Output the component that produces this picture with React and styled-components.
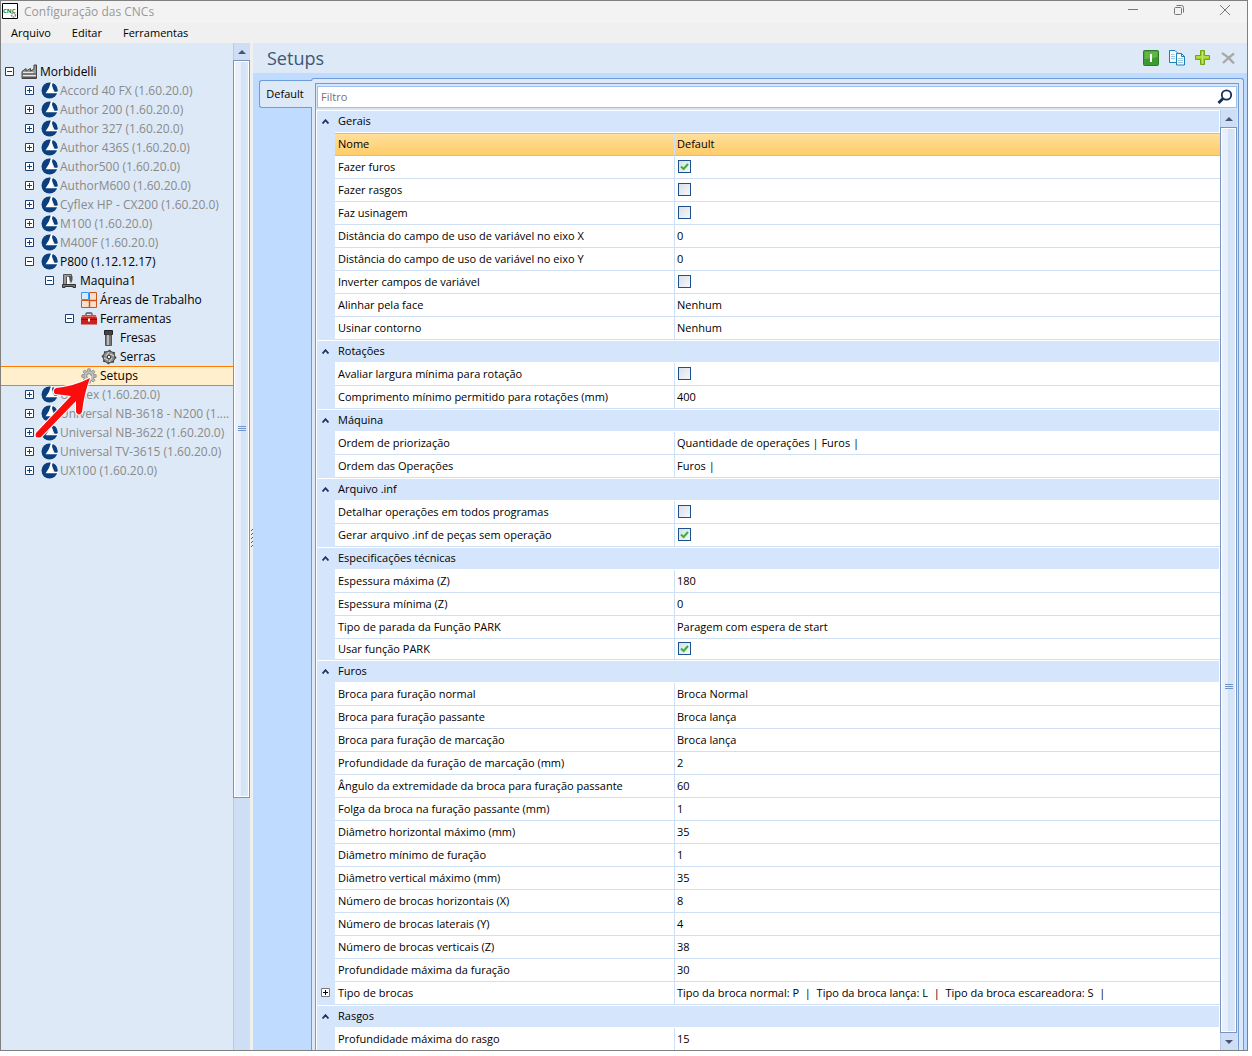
import React, { Component } from 'react'
import styled, { createGlobalStyle, css } from 'styled-components'

const tree = [
    {level:0, icon:'factory', label:'Morbidelli', open:true, dark:true},
    {level:1, icon:'brand', label:'Accord 40 FX (1.60.20.0)', open:false},
    {level:1, icon:'brand', label:'Author 200 (1.60.20.0)', open:false},
    {level:1, icon:'brand', label:'Author 327 (1.60.20.0)', open:false},
    {level:1, icon:'brand', label:'Author 436S (1.60.20.0)', open:false},
    {level:1, icon:'brand', label:'Author500 (1.60.20.0)', open:false},
    {level:1, icon:'brand', label:'AuthorM600 (1.60.20.0)', open:false},
    {level:1, icon:'brand', label:'Cyflex HP - CX200 (1.60.20.0)', open:false},
    {level:1, icon:'brand', label:'M100 (1.60.20.0)', open:false},
    {level:1, icon:'brand', label:'M400F (1.60.20.0)', open:false},
    {level:1, icon:'brand', label:'P800 (1.12.12.17)', open:true, dark:true},
    {level:2, icon:'machine', label:'Maquina1', open:true, dark:true},
    {level:3, icon:'areas', label:'Áreas de Trabalho', dark:true},
    {level:3, icon:'toolbox', label:'Ferramentas', open:true, dark:true},
    {level:4, icon:'mill', label:'Fresas', dark:true},
    {level:4, icon:'saw', label:'Serras', dark:true},
    {level:3, icon:'gear', label:'Setups', dark:true, selected:true},
    {level:1, icon:'brand', label:'Uniflex (1.60.20.0)', open:false},
    {level:1, icon:'brand', label:'Universal NB-3618 - N200 (1....', open:false},
    {level:1, icon:'brand', label:'Universal NB-3622 (1.60.20.0)', open:false},
    {level:1, icon:'brand', label:'Universal TV-3615 (1.60.20.0)', open:false},
    {level:1, icon:'brand', label:'UX100 (1.60.20.0)', open:false},
]

const groups = [
    {title:'Gerais', rows:[
        ['Nome','Default'],
        ['Fazer furos',true],
        ['Fazer rasgos',false],
        ['Faz usinagem',false],
        ['Distância do campo de uso de variável no eixo X','0'],
        ['Distância do campo de uso de variável no eixo Y','0'],
        ['Inverter campos de variável',false],
        ['Alinhar pela face','Nenhum'],
        ['Usinar contorno','Nenhum'],
    ]},
    {title:'Rotações', rows:[
        ['Avaliar largura mínima para rotação',false],
        ['Comprimento mínimo permitido para rotações (mm)','400'],
    ]},
    {title:'Máquina', rows:[
        ['Ordem de priorização','Quantidade de operações | Furos |'],
        ['Ordem das Operações','Furos |'],
    ]},
    {title:'Arquivo .inf', rows:[
        ['Detalhar operações em todos programas',false],
        ['Gerar arquivo .inf de peças sem operação',true],
    ]},
    {title:'Especificações técnicas', short:true, rows:[
        ['Espessura máxima (Z)','180'],
        ['Espessura mínima (Z)','0'],
        ['Tipo de parada da Função PARK','Paragem com espera de start'],
        ['Usar função PARK',true],
    ]},
    {title:'Furos', rows:[
        ['Broca para furação normal','Broca Normal'],
        ['Broca para furação passante','Broca lança'],
        ['Broca para furação de marcação','Broca lança'],
        ['Profundidade da furação de marcação (mm)','2'],
        ['Ângulo da extremidade da broca para furação passante','60'],
        ['Folga da broca na furação passante (mm)','1'],
        ['Diâmetro horizontal máximo (mm)','35'],
        ['Diâmetro mínimo de furação','1'],
        ['Diâmetro vertical máximo (mm)','35'],
        ['Número de brocas horizontais (X)','8'],
        ['Número de brocas laterais (Y)','4'],
        ['Número de brocas verticais (Z)','38'],
        ['Profundidade máxima da furação','30'],
        ['Tipo de brocas','Tipo da broca normal: P  |  Tipo da broca lança: L  |  Tipo da broca escareadora: S  |'],
    ]},
    {title:'Rasgos', rows:[
        ['Profundidade máxima do rasgo','15'],
    ]},
]

const teeth = [0,45,90,135,180,225,270,315]

function TreeIcon({name}) {
    if (name==='brand') return (
        <svg width="17" height="17" viewBox="0 0 17 17">
            <circle cx="8.5" cy="8.5" r="8" fill="#0b3f7d"/>
            <path d="M10 0 H12 L11.6 2.6 L11.4 9.6 H17 V11.2 H4.6 Q8.6 6.5 10 0 Z" fill="#fff"/>
            <path d="M11.8 1.2 A8 8 0 0 1 16.4 9.4 H13.8 L11 3.6 Z" fill="#0b3f7d"/>
            <path d="M11.2 4.6 L13.4 9.8 H11 Z" fill="#fff"/>
        </svg>
    )
    if (name==='factory') return (
        <svg width="17" height="17" viewBox="0 0 17 17">
            <path d="M1 15.5 V8.5 L5 5.5 V8 L9.5 5.5 V8 L13 6 V2 H15.5 V15.5 Z" fill="#999" stroke="#444"/>
            <path d="M2 9.5 H12.5 M2 12.5 H15" stroke="#e8e8e8"/>
            <path d="M1.5 11 H15 M1.5 14.5 H15" stroke="#555"/>
        </svg>
    )
    if (name==='machine') return (
        <svg width="16" height="16" viewBox="0 0 16 16">
            <path d="M2.5 12 V1.5 H10.5 V4 H5.5 V12 Z" fill="#999" stroke="#555"/>
            <path d="M6 4 H8 V11 H6 Z" fill="#fff"/>
            <path d="M8 3 H11.5 V7 L10 10.5 L8.5 7 Z" fill="#555"/>
            <path d="M1.5 11.5 H14.5 V14.5 H12 V13.5 H4 V14.5 H1.5 Z" fill="#777" stroke="#333"/>
        </svg>
    )
    if (name==='areas') return (
        <svg width="16" height="16" viewBox="0 0 16 16">
            <path d="M8.5 .5 H15.5 V15.5 H.5 V8.5 H8.5 Z" fill="#f9dfcb" stroke="#c8581c"/>
            <path d="M8.5 8 V15.5 M8 8.5 H15.5" stroke="#c8581c" strokeWidth="1.5"/>
            <path d="M.5 .5 H7.5 V7.5 H.5 Z" fill="#d8ecff" stroke="#3399ff"/>
        </svg>
    )
    if (name==='toolbox') return (
        <svg width="16" height="16" viewBox="0 0 16 16">
            <path d="M5 5 V3 Q5 2 6 2 H10 Q11 2 11 3 V5" fill="none" stroke="#555" strokeWidth="1.3"/>
            <path d="M1.5 4 H14.5 L16 7 V13.5 H0 V7 Z" fill="#c9211e"/>
            <path d="M1.5 4.5 H14.5 L15 6 H1 Z" fill="#ea6a62"/>
            <path d="M0 8.5 H16" stroke="#8f1010"/>
            <path d="M7 7.5 H9 V10.5 H7 Z" fill="#fff"/>
        </svg>
    )
    if (name==='mill') return (
        <svg width="16" height="16" viewBox="0 0 16 16">
            <path d="M3.5 .5 H11.5 V4.5 H3.5 Z" fill="#444" stroke="#222"/>
            <path d="M4.5 5 H10.5 V15.5 H4.5 Z" fill="#777" stroke="#555"/>
            <path d="M7 5 V15" stroke="#bbb" strokeWidth="2"/>
        </svg>
    )
    if (name==='saw') return (
        <svg width="16" height="16" viewBox="0 0 16 16">
            {teeth.map(a=><path key={a} transform={`rotate(${a} 8 8)`} d="M5 3 L9 .4 L11 3.5 Z" fill="#444"/>)}
            <circle cx="8" cy="8" r="5.8" fill="#8c8c8c" stroke="#555"/>
            <path d="M8 3 L5 7 M13 7 L9 5 M8 13 L11 9 M3 9 L7 11" stroke="#ddd"/>
            <circle cx="8" cy="8" r="1.8" fill="#eee" stroke="#333"/>
        </svg>
    )
    return (
        <svg width="16" height="16" viewBox="0 0 16 16">
            {teeth.map(a=><path key={a} transform={`rotate(${a} 8 8)`} d="M6.8 .8 H9.2 L9.7 4 H6.3 Z" fill="#c4c4c4" stroke="#777" strokeWidth=".7"/>)}
            <circle cx="8" cy="8" r="5" fill="#c4c4c4" stroke="#8d8d8d" strokeWidth=".6"/>
            <circle cx="8" cy="8" r="2.4" fill="#ffefcd" stroke="#777" strokeWidth=".9"/>
        </svg>
    )
}

function Expander({open,label,gray}) {
    return (
        <ExpandButton aria-label={(open?'Recolher ':'Expandir ')+label}>
            <svg width="9" height="9" viewBox="0 0 9 9">
                <path d="M.5 .5 H8.5 V8.5 H.5 Z" fill="#fff" stroke={gray?'#777':'#1c3f75'}/>
                <path d={open?'M2 4.5 H7':'M2 4.5 H7 M4.5 2 V7'} stroke={gray?'#000':'#1c3f75'}/>
            </svg>
        </ExpandButton>
    )
}

function ScrollBar({size,rest,grip,down}) {
    return (
        <ScrollTrack>
            <ScrollButton aria-label="Rolar para cima">
                <svg width="8" height="4" viewBox="0 0 8 4"><path d="M0 4 L4 0 L8 4 Z" fill="#4a5377"/></svg>
            </ScrollButton>
            <ScrollThumb $size={size} $grip={grip}>
                <svg width="8" height="6" viewBox="0 0 8 6"><path d="M0 .5 H8 M0 2.5 H8 M0 4.5 H8" stroke="#6f95cc"/></svg>
            </ScrollThumb>
            {rest?<ScrollRest $size={rest}/>:null}
            {down?(
                <ScrollButton aria-label="Rolar para baixo">
                    <svg width="8" height="4" viewBox="0 0 8 4"><path d="M0 0 L4 4 L8 0 Z" fill="#4a5377"/></svg>
                </ScrollButton>
            ):null}
        </ScrollTrack>
    )
}

class Sidebar extends Component {
    render() {
        return (
            <SideWrap>
                <Tree>
                    {tree.map((item)=>(
                        <TreeRow key={item.label+item.level} $level={item.level} $dark={item.dark} $selected={item.selected}>
                            <Slot>
                                {item.open===undefined?null:<Expander open={item.open} label={item.label}/>}
                            </Slot>
                            <IconBox><TreeIcon name={item.icon}/></IconBox>
                            <TreeLabel>{item.label}</TreeLabel>
                        </TreeRow>
                    ))}
                    <Arrow viewBox="0 0 66 66">
                        <path d="M3 57 L38 20 L22 18 Q19 14 23 12 Q42 10 57 2 Q51 18 49 36 Q46 41 43 36 L43 25 L8 61 Q1 63 3 57 Z" fill="#f90d0d" stroke="#fff" strokeWidth="2" paintOrder="stroke"/>
                    </Arrow>
                </Tree>
                <ScrollBar size={738} rest={253}/>
            </SideWrap>
        )
    }
}

class PropertyGrid extends Component {
    render() {
        return (
            <Grid>
                <colgroup>
                    <GutterCol/>
                    <NameCol/>
                    <col/>
                </colgroup>
                {groups.map((group)=>(
                    <tbody key={group.title}>
                        <tr>
                            <GroupMark>
                                <GroupButton aria-label={'Recolher '+group.title}>
                                    <svg width="7" height="5" viewBox="0 0 7 5"><path d="M.5 4.5 L3.5 1.2 L6.5 4.5" fill="none" stroke="#17356b" strokeWidth="1.8"/></svg>
                                </GroupButton>
                            </GroupMark>
                            <GroupTitle colSpan="2" scope="colgroup">{group.title}</GroupTitle>
                        </tr>
                        {group.rows.map(([name,value],i)=>{
                            const selected=name==='Nome'
                            const short=group.short && i===group.rows.length-1
                            const id='campo-'+name.replace(/\W+/g,'-')
                            return (
                                <tr key={name}>
                                    <Gutter>{name==='Tipo de brocas'?<Expander label={name} gray/>:null}</Gutter>
                                    <NameCell scope="row" $selected={selected} $short={short}>
                                        {typeof value==='boolean'?<label htmlFor={id}>{name}</label>:name}
                                    </NameCell>
                                    <ValueCell $selected={selected} $short={short}>
                                        {typeof value==='boolean'?<Check id={id} defaultChecked={value}/>:value}
                                    </ValueCell>
                                </tr>
                            )
                        })}
                    </tbody>
                ))}
            </Grid>
        )
    }
}

function Check({id,defaultChecked}) {
    return (
        <CheckWrap>
            <CheckInput type="checkbox" id={id} defaultChecked={defaultChecked}/>
            <svg width="9" height="9" viewBox="0 0 9 9"><path d="M1 4.5 L3.6 7 L8 2" fill="none" stroke="#3fae3a" strokeWidth="2"/></svg>
        </CheckWrap>
    )
}

export default class App extends Component {
    render() {
        return (
            <Window>
                <GlobalStyle/>
                <TitleBar>
                    <svg width="16" height="16" viewBox="0 0 16 16">
                        <path d="M.5 .5 H15.5 V15.5 H.5 Z" fill="#fff" stroke="#000"/>
                        <AppMark x="1" y="10">CNC</AppMark>
                        <circle cx="11.5" cy="12" r="2" fill="none" stroke="#888" strokeWidth="1.5" strokeDasharray="1.5 .6"/>
                    </svg>
                    <WindowTitle>Configuração das CNCs</WindowTitle>
                    <WindowButton aria-label="Minimizar">
                        <svg width="10" height="10" viewBox="0 0 10 10"><path d="M0 4.5 H10" stroke="#777"/></svg>
                    </WindowButton>
                    <WindowButton aria-label="Restaurar">
                        <svg width="10" height="10" viewBox="0 0 10 10" fill="none" stroke="#777"><rect x=".5" y="2.5" width="7" height="7" rx="1"/><path d="M2.5 .5 H7.5 Q9.5 .5 9.5 2.5 V7.5"/></svg>
                    </WindowButton>
                    <WindowButton aria-label="Fechar">
                        <svg width="10" height="10" viewBox="0 0 10 10"><path d="M0 0 L10 10 M10 0 L0 10" stroke="#777"/></svg>
                    </WindowButton>
                </TitleBar>
                <MenuBar>
                    <MenuButton>Arquivo</MenuButton>
                    <MenuButton>Editar</MenuButton>
                    <MenuButton>Ferramentas</MenuButton>
                </MenuBar>
                <Body>
                    <Sidebar/>
                    <Splitter>
                        <svg width="2" height="18" viewBox="0 0 2 18">
                            {[0,4,8,12,16].map(y=><path key={y} d={`M0 ${y+1.5} H1 M1 ${y+.5} H2`} stroke="#1f66c8"/>)}
                        </svg>
                    </Splitter>
                    <Main>
                        <Header>
                            <Heading>Setups</Heading>
                            <ToolButton aria-label="Ativar">
                                <svg width="16" height="16" viewBox="0 0 16 16">
                                    <rect x=".5" y=".5" width="15" height="15" rx="1" fill="#3c9a30" stroke="#2a7d27"/>
                                    <path d="M1.5 1.5 H14.5 V7 Q8 9 1.5 9 Z" fill="#63b548"/>
                                    <path d="M7 4 H9 V12 H7 Z" fill="#fff"/>
                                </svg>
                            </ToolButton>
                            <ToolButton aria-label="Copiar">
                                <svg width="16" height="16" viewBox="0 0 16 16">
                                    <path d="M.5 .5 H6 L8.5 3 V12.5 H.5 Z" fill="#f4fbff" stroke="#1d7fb8"/>
                                    <path d="M2 4.5 H5 M2 6.5 H6 M2 8.5 H6" stroke="#9cc9e4"/>
                                    <path d="M7.5 3.5 H12.5 L15.5 6.5 V15 H7.5 Z" fill="#f4fbff" stroke="#1d7fb8"/>
                                    <path d="M12.5 3.5 V6.5 H15.5" fill="none" stroke="#1d7fb8"/>
                                    <path d="M9 8.5 H14 M9 10.5 H14 M9 12.5 H14" stroke="#9cc9e4"/>
                                </svg>
                            </ToolButton>
                            <ToolButton aria-label="Adicionar">
                                <svg width="16" height="16" viewBox="0 0 16 16">
                                    <path d="M5.5 .5 H9.5 V5.5 H14.5 V9.5 H9.5 V14.5 H5.5 V9.5 H.5 V5.5 H5.5 Z" fill="#9ed02a" stroke="#6fa514"/>
                                    <path d="M7.5 1.5 V13.5 M1.5 7 H13.5" stroke="#c3e86a"/>
                                </svg>
                            </ToolButton>
                            <ToolButton aria-label="Excluir">
                                <svg width="16" height="16" viewBox="0 0 16 16"><path d="M1 3 Q8 7 13 13.5 M13 3.5 Q7 8 2 13" fill="none" stroke="#a8a8a8" strokeWidth="2.2"/></svg>
                            </ToolButton>
                        </Header>
                        <Workspace>
                            <TabButton>Default</TabButton>
                            <Page>
                                <Inner>
                                    <FilterBox>
                                        <FilterInput type="text" placeholder="Filtro" aria-label="Filtro"/>
                                        <SearchButton aria-label="Pesquisar">
                                            <svg width="16" height="16" viewBox="0 0 16 16"><circle cx="9.5" cy="6" r="4.7" fill="none" stroke="#16305c" strokeWidth="1.8"/><path d="M6 9.5 L1.5 14" stroke="#16305c" strokeWidth="3"/></svg>
                                        </SearchButton>
                                    </FilterBox>
                                    <GridArea>
                                        <GridScroll><PropertyGrid/></GridScroll>
                                        <ScrollBar size={1} grip={214} down/>
                                    </GridArea>
                                </Inner>
                            </Page>
                        </Workspace>
                    </Main>
                </Body>
            </Window>
        )
    }
}

const GlobalStyle=createGlobalStyle
`
*{
    box-sizing:border-box;
}
body{
    margin:0;
    background:#fff;
}
button,input{
    font:inherit;
    color:inherit;
    margin:0;
    padding:0;
}
button{
    display:flex;
    align-items:center;
    justify-content:center;
    border:0;
    background:transparent;
}
svg{
    display:block;
}
`

const Window=styled.div
`
display:flex;
flex-direction:column;
height:calc(100vh - 5px);
margin-right:4px;
overflow:hidden;
border:1px solid #808080;
background:#f0f0f0;
color:#000;
font-family:"Open Sans","Noto Sans",sans-serif;
font-size:11px;
`

const TitleBar=styled.header
`
display:flex;
align-items:center;
height:22px;
padding:0 0 2px 1px;
background:#f3f3f3;
`

const AppMark=styled.text
`
fill:#0a7a1c;
font-size:6px;
font-weight:bold;
`

const WindowTitle=styled.div
`
flex:1;
padding-left:6px;
font-size:12px;
color:#999;
`

const WindowButton=styled.button
`
width:46px;
height:20px;
padding:0 0 2px 2px;
`

const MenuBar=styled.nav
`
display:flex;
gap:21px;
height:20px;
padding:0 10px;
`

const MenuButton=styled.button
`
height:18px;
`

const Body=styled.div
`
display:flex;
flex:1;
min-height:0;
`

const SideWrap=styled.aside
`
display:flex;
flex:0 0 249px;
min-width:0;
background:#dde9f7;
`

const Tree=styled.div
`
position:relative;
flex:1;
min-width:0;
padding-top:19px;
`

const TreeRow=styled.div
`
display:flex;
align-items:center;
height:19px;
padding-left:${p=>p.$level*20+4}px;
font-size:12px;
color:${p=>p.$dark?'#000':'#8a8a8a'};
${p=>p.$selected && css`
    height:20px;
    margin-bottom:-1px;
    padding-bottom:1px;
    border:solid #ff7800;
    border-width:1px 0;
    background:#ffefcd;
`}
`

const Slot=styled.span
`
flex:0 0 16px;
`

const IconBox=styled.span
`
flex:0 0 17px;
`

const TreeLabel=styled.span
`
padding-left:2px;
white-space:nowrap;
`

const ExpandButton=styled.button
`
width:9px;
height:9px;
`

const Arrow=styled.svg
`
position:absolute;
left:32px;
top:333px;
width:66px;
height:66px;
`

const ScrollTrack=styled.div
`
display:flex;
flex-direction:column;
flex:0 0 17px;
border-left:1px solid #b6cbe8;
background:#cddef5;
`

const ScrollButton=styled.button
`
flex:0 0 17px;
`

const ScrollThumb=styled.div
`
display:flex;
align-items:center;
justify-content:center;
flex:${p=>p.$size} 1 0;
margin-left:-1px;
padding-top:${p=>p.$grip||0}px;
border:1px solid #7a93bf;
box-shadow:inset 0 0 0 1px #fff;
background:linear-gradient(90deg,#ecf2fc 0,#e6eefb 50%,#d3e2f6 50%,#dde9f8 100%);
`

const ScrollRest=styled.div
`
flex:${p=>p.$size} 1 0;
`

const Splitter=styled.div
`
display:flex;
align-items:center;
justify-content:flex-end;
flex:0 0 3px;
background:#f0f0f0;
padding-bottom:18px;
`

const Main=styled.main
`
display:flex;
flex-direction:column;
flex:1;
min-width:0;
background:#bfdbff;
`

const Header=styled.div
`
display:flex;
align-items:center;
gap:10px;
height:30px;
padding:0 10px 0 14px;
background:#dde9f7;
`

const Heading=styled.h1
`
flex:1;
margin:0;
font-size:18px;
font-weight:400;
color:#3d5674;
`

const ToolButton=styled.button
`
width:16px;
height:16px;
`

const Workspace=styled.div
`
display:flex;
align-items:flex-start;
flex:1;
min-height:0;
padding:5px 3px 0 6px;
`

const TabButton=styled.button
`
position:relative;
z-index:1;
width:53px;
height:28px;
margin:2px -1px 0 0;
padding:0 2px 2px 0;
border:1px solid #6f9bd8;
border-right:0;
border-radius:3px 0 0 3px;
background:#dde9f7;
`

const Page=styled.section
`
align-self:stretch;
display:flex;
flex:1;
min-width:0;
padding:4px 4px 0 3px;
border:1px solid #6f9bd8;
border-bottom:0;
border-radius:3px 3px 0 0;
background:#dde9f7;
`

const Inner=styled.div
`
display:flex;
flex-direction:column;
flex:1;
min-width:0;
border:1px solid #6f9bd8;
border-bottom:0;
background:#d5e6fc;
`

const FilterBox=styled.div
`
display:flex;
align-items:center;
height:22px;
margin:2px 1px;
border:1px solid #9dbfeb;
background:#fff;
`

const FilterInput=styled.input
`
flex:1;
min-width:0;
height:20px;
padding:0 3px 1px;
border:0;
outline:0;
background:transparent;
&::placeholder{
    color:#7a6f73;
    opacity:1;
}
`

const SearchButton=styled.button
`
width:16px;
height:16px;
margin-right:3px;
`

const GridArea=styled.div
`
display:flex;
flex:1;
min-height:0;
padding-right:1px;
`

const GridScroll=styled.div
`
flex:1;
min-width:0;
overflow:hidden;
border-left:1px solid #fff;
`

const Grid=styled.table
`
width:100%;
table-layout:fixed;
border-spacing:0;
background:#fff;
`

const GutterCol=styled.col
`
width:18px;
`

const NameCol=styled.col
`
width:340px;
`

const GroupMark=styled.td
`
height:23px;
padding:0 0 2px 4px;
border-top:1px solid #fff;
background:#d5e6fc;
`

const GroupButton=styled.button
`
width:9px;
height:9px;
`

const GroupTitle=styled.th
`
height:23px;
padding:0 0 2px 3px;
border:solid #fff;
border-width:1px 1px 1px 0;
background:#d5e6fc;
font-weight:400;
text-align:left;
`

const Gutter=styled.td
`
padding:0 0 2px 4px;
background:#d5e6fc;
`

const cell=css
`
height:${p=>p.$short?21:23}px;
padding:0 0 1px 3px;
border-bottom:1px solid #cfe0f5;
font-weight:400;
text-align:left;
white-space:pre;
${p=>p.$selected && css`
    padding-bottom:2px;
    border-top:1px solid #fcb55a;
    border-bottom:1px solid #fcb55a;
    background:linear-gradient(#ffdf9b,#ffcc69);
`}
`

const NameCell=styled.th
`
${cell}
border-right:1px solid #cfe0f5;
`

const ValueCell=styled.td
`
${cell}
padding-left:2px;
`

const CheckWrap=styled.span
`
display:grid;
width:13px;
height:13px;
margin-left:1px;
>*{
    grid-area:1/1;
    place-self:center;
}
>svg{
    visibility:hidden;
    pointer-events:none;
}
>input:checked+svg{
    visibility:visible;
}
`

const CheckInput=styled.input
`
appearance:none;
width:13px;
height:13px;
border:1px solid #1c5290;
background:linear-gradient(135deg,#dcdfe8,#f6f7fa);
`
